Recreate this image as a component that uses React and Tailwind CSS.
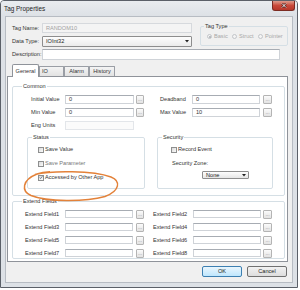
import React from 'react'

const Box = ({ className = '', children }) => (
  <div className={`flex items-center pl-[3px] bg-white border border-[#cfd3d8] border-t-[#a7acb3] ${className}`}>
    {children}
  </div>
)

const Dots = ({ className = '' }) => (
  <div className={`h-[9px] flex items-end justify-center pb-[2px] border border-[#b4b4b4] rounded-[1px] bg-linear-to-b from-[#fbfbfb] to-[#e3e3e3] text-[#8a8a8a] text-[5px] leading-[4px] ${className}`}>
    ...
  </div>
)

const Check = ({ checked }) => (
  <span className="w-[6px] h-[6px] shrink-0 border border-[#8e8f8f] bg-linear-to-br from-[#dadada] to-[#fbfbfb] flex items-center justify-center">
    {checked && (
      <svg width="5" height="5" viewBox="0 0 5 5">
        <path d="M0.8 2.6 L2 3.8 L4.3 0.9" fill="none" stroke="#4a5d7a" strokeWidth="0.9" />
      </svg>
    )}
  </span>
)

const Radio = ({ on }) => (
  <span className="w-[5px] h-[5px] shrink-0 rounded-full border border-[#c2c5c9] bg-[#f4f4f4] flex items-center justify-center">
    {on && <span className="w-[2px] h-[2px] rounded-full bg-[#a9adb2]" />}
  </span>
)

const Group = ({ title, className = '', legend = 'ml-[9px]', children }) => (
  <fieldset className={`border border-[#d5dfe5] rounded-[2px] ${className}`}>
    <legend className={`px-[1px] leading-[8px] ${legend}`}>{title}</legend>
    {children}
  </fieldset>
)

const Field = ({ label, value, lw, iw, bw = 'w-[8px]', gap = 'ml-[2px]', disabled }) => (
  <div className="flex items-center h-[9px]">
    <span className={lw}>{label}</span>
    {disabled ? (
      <div className={`h-[9px] border border-[#e3e6ea] bg-[#fbfbfb] ${iw}`} />
    ) : (
      <Box className={`h-[9px] ${iw}`}>{value}</Box>
    )}
    {!disabled && <Dots className={`${bw} ${gap}`} />}
  </div>
)

const Tab = ({ children, active, className = '' }) =>
  active ? (
    <div className={`h-[13px] -mb-px relative z-10 flex items-center justify-center bg-white border border-b-0 border-[#8f939a] rounded-t-[2px] ${className}`}>
      {children}
    </div>
  ) : (
    <div className={`h-[10px] flex items-center justify-center border border-b-0 border-[#9a9ea5] bg-linear-to-b from-[#f4f4f4] to-[#e2e2e2] rounded-t-[1px] ${className}`}>
      {children}
    </div>
  )

const ExtRow = ({ a, b }) => (
  <div className="flex items-center h-[8px]">
    <span className="w-[40px]">{a}</span>
    <Box className="h-[8px] w-[68px]" />
    <Dots className="w-[8px] h-[8px] ml-[3px]" />
    <span className="w-[40px] ml-[9px]">{b}</span>
    <Box className="h-[8px] w-[68px]" />
    <Dots className="w-[9px] h-[8px] ml-[2px]" />
  </div>
)

export default function App() {
  return (
    <div className="w-[300px] h-[290px] bg-white overflow-hidden font-['Liberation_Sans',Arial,sans-serif] text-[5.6px] text-[#333]">
      <div className="w-[298px] h-[288px] border border-[#5b6068] rounded-t-[4px] bg-[#dde1e6] flex flex-col">
        {/* title bar */}
        <div className="h-[15px] flex justify-between bg-linear-to-b from-[#e9ecef] to-[#dde1e6] rounded-t-[3px]">
          <span className="pl-[3px] pt-[4px] text-[6.4px] text-[#1f1f1f] leading-[7px]">Tag Properties</span>
          <div className="w-[23px] h-[10px] mr-[2px] rounded-b-[3px] border border-t-0 border-[#7c2b22] bg-linear-to-b from-[#dd9a8c] via-[#c9493a] to-[#b6372a] flex items-center justify-center">
            <svg width="6" height="5" viewBox="0 0 6 5">
              <path d="M1 0.5 L5 4.5 M5 0.5 L1 4.5" stroke="#4a1510" strokeWidth="2" />
              <path d="M1 0.5 L5 4.5 M5 0.5 L1 4.5" stroke="#fff" strokeWidth="1" />
            </svg>
          </div>
        </div>

        {/* client area */}
        <div className="mx-[4px] h-[267px] border border-[#b7bcc3] bg-[#f0f0f0] flex flex-col">
          <div className="pt-[6px] pl-[6px] flex">
            <div className="flex flex-col">
              <div className="flex items-center h-[10px]">
                <span className="w-[30px]">Tag Name:</span>
                <div className="w-[150px] h-[10px] pl-[3px] flex items-center border border-[#d6d9dd] bg-[#f4f4f4] text-[#a2a2a2]">
                  RANDOM10
                </div>
              </div>
              <div className="flex items-center h-[11px] mt-[3px]">
                <span className="w-[30px]">Data Type:</span>
                <div className="w-[150px] h-[11px] pl-[3px] pr-[2px] flex items-center justify-between border border-[#8d8d8d] rounded-[1px] bg-linear-to-b from-[#fdfdfd] to-[#ebebeb] text-[#222]">
                  <span>IOInt32</span>
                  <svg width="4" height="3" viewBox="0 0 4 3">
                    <path d="M0 0 H4 L2 2.5 Z" fill="#222" />
                  </svg>
                </div>
              </div>
            </div>
            <Group title="Tag Type" className="ml-[8px] -mt-[1px] w-[88px] h-[24px]" legend="ml-[3px]">
              <div className="mt-[3px] pl-[6px] flex items-center text-[#a8a8a8] h-[7px]">
                <span className="w-[25px] flex items-center gap-[2px]"><Radio on />Basic</span>
                <span className="w-[26px] flex items-center gap-[2px]"><Radio />Struct</span>
                <span className="flex items-center gap-[2px]"><Radio />Pointer</span>
              </div>
            </Group>
          </div>

          <div className="pl-[6px] mt-[2px] flex items-center h-[11px]">
            <span className="w-[30px]">Description:</span>
            <Box className="w-[238px] h-[11px]" />
          </div>

          {/* tabs */}
          <div className="mt-[4px] pl-[6px] flex items-end h-[12px]">
            <Tab active className="w-[27px]">General</Tab>
            <Tab className="w-[25px] justify-start pl-[2px]">IO</Tab>
            <Tab className="w-[25px]">Alarm</Tab>
            <Tab className="w-[26px]">History</Tab>
          </div>

          <div className="ml-[1px] w-[281px] h-[186px] border border-[#8f939a] bg-white flex flex-col">
            <Group title="Common" className="ml-[4px] mt-[5px] w-[273px] pb-[6px]">
              <div className="mt-[5px] flex">
                <div className="pl-[18px] flex flex-col gap-[4px]">
                  <Field label="Initial Value" value="0" lw="w-[34px]" iw="w-[69px]" />
                  <Field label="Min Value" value="0" lw="w-[34px]" iw="w-[69px]" />
                  <Field label="Eng Units" lw="w-[34px]" iw="w-[69px]" disabled />
                </div>
                <div className="ml-[16px] flex flex-col gap-[4px]">
                  <Field label="Deadband" value="0" lw="w-[32px]" iw="w-[68px]" bw="w-[9px]" gap="ml-[3px]" />
                  <Field label="Max Value" value="10" lw="w-[32px]" iw="w-[68px]" bw="w-[9px]" gap="ml-[3px]" />
                </div>
              </div>

              <div className="mt-[3px] ml-[14px] flex">
                <Group title="Status" className="relative w-[118px] pb-[7px]" legend="ml-[4px]">
                  <div className="mt-[5px] pl-[10px] flex flex-col gap-[7px]">
                    <div className="flex items-center gap-[1px] h-[7px]"><Check />Save Value</div>
                    <div className="flex items-center gap-[1px] h-[7px] text-[#777]"><Check />Save Parameter</div>
                    <div className="flex items-center gap-[1px] h-[7px]"><Check checked />Accessed by Other App</div>
                  </div>
                  <svg className="absolute left-[-5px] top-[30px] overflow-visible" width="97" height="30" viewBox="0 0 97 30">
                    <path
                      d="M12 3.5 C28 -0.5 70 -0.5 88 6 C98 10 97 20 82 25.5 C62 31 24 31 8 24.5 C-2 20 -1 9 14 3 C18 1.6 23 1 27 0.8"
                      fill="none"
                      stroke="#e3823a"
                      strokeWidth="1.5"
                    />
                  </svg>
                </Group>
                <Group title="Security" className="ml-[12px] w-[116px]" legend="ml-[4px]">
                  <div className="mt-[5px] pl-[13px] flex items-center gap-[1px] h-[7px]"><Check />Record Event</div>
                  <div className="mt-[7px] pl-[14px] flex items-center h-[7px]">Security Zone:</div>
                  <div className="mt-[4px] ml-[44px] w-[47px] h-[8px] pl-[3px] pr-[2px] flex items-center justify-between border border-[#8d8d8d] rounded-[1px] bg-linear-to-b from-[#fdfdfd] to-[#e6e6e6] text-[#222]">
                    <span>None</span>
                    <svg width="4" height="3" viewBox="0 0 4 3">
                      <path d="M0 0 H4 L2 2.5 Z" fill="#222" />
                    </svg>
                  </div>
                </Group>
              </div>
            </Group>

            <Group title="Extend Fields" className="ml-[4px] mt-[1px] w-[273px] pb-[1px]">
              <div className="mt-[5px] pl-[12px] flex flex-col gap-[5px]">
                <ExtRow a="Extend Field1" b="Extend Field2" />
                <ExtRow a="Extend Field3" b="Extend Field4" />
                <ExtRow a="Extend Field5" b="Extend Field6" />
                <ExtRow a="Extend Field7" b="Extend Field8" />
              </div>
            </Group>
          </div>

          <div className="mt-[4px] pr-[5px] flex justify-end gap-[5px]">
            <button className="w-[40px] h-[11px] rounded-[2px] border border-[#3c7fb1] bg-linear-to-b from-[#eaf6fd] to-[#bee6fd] text-[#222] leading-none">
              OK
            </button>
            <button className="w-[40px] h-[11px] rounded-[2px] border border-[#707070] bg-linear-to-b from-[#f2f2f2] to-[#dddddd] text-[#222] leading-none">
              Cancel
            </button>
          </div>
        </div>
      </div>
    </div>
  )
}
